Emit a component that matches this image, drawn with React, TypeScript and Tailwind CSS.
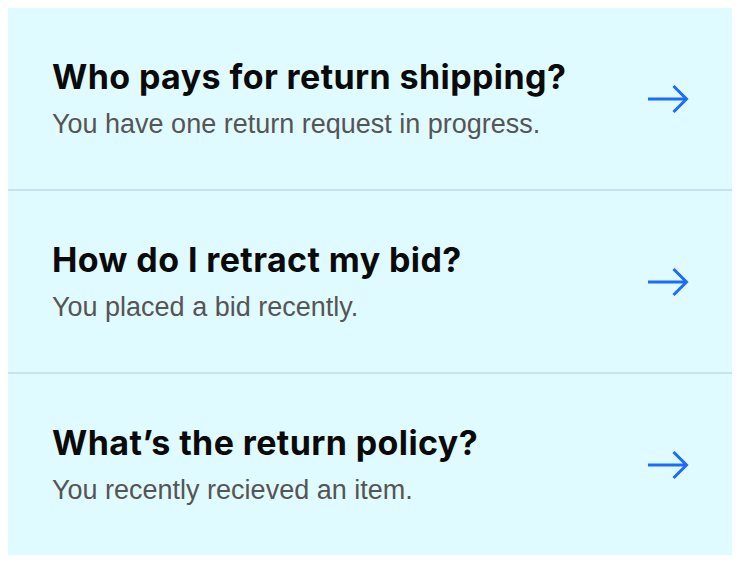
import React from "react";

const items = [
  { title: "Who pays for return shipping?", sub: "You have one return request in progress." },
  { title: "How do I retract my bid?", sub: "You placed a bid recently." },
  { title: "What’s the return policy?", sub: "You recently recieved an item." },
];

function Arrow() {
  return (
    <svg width="42" height="30" viewBox="0 0 42 30" fill="none" className="shrink-0">
      <path d="M1 15H39" stroke="#1a6cff" strokeWidth="3" />
      <path d="M26.5 2L39.5 15L26.5 28" stroke="#1a6cff" strokeWidth="3" strokeLinejoin="miter" />
    </svg>
  );
}

export default function App() {
  return (
    <div className="w-[740px] h-[564px] bg-white p-2">
      <div className="w-[724px] h-[547px] bg-[#e0fbff] flex flex-col">
        {items.map((it, i) => (
          <div
            key={i}
            className={`flex-1 flex items-center justify-between pl-[44px] pr-[43px] ${i < 2 ? "border-b-2 border-[#c8e2f0]" : ""}`}
          >
            <div className="flex flex-col">
              <div className="text-[34px] leading-[38px] font-bold text-[#0a0a0a] tracking-[0.4px] font-['Inter',sans-serif]">
                {it.title}
              </div>
              <div className="mt-[12px] text-[27px] leading-[32px] text-[#555] font-['Liberation_Sans',Arial,sans-serif]">
                {it.sub}
              </div>
            </div>
            <Arrow />
          </div>
        ))}
      </div>
    </div>
  );
}
